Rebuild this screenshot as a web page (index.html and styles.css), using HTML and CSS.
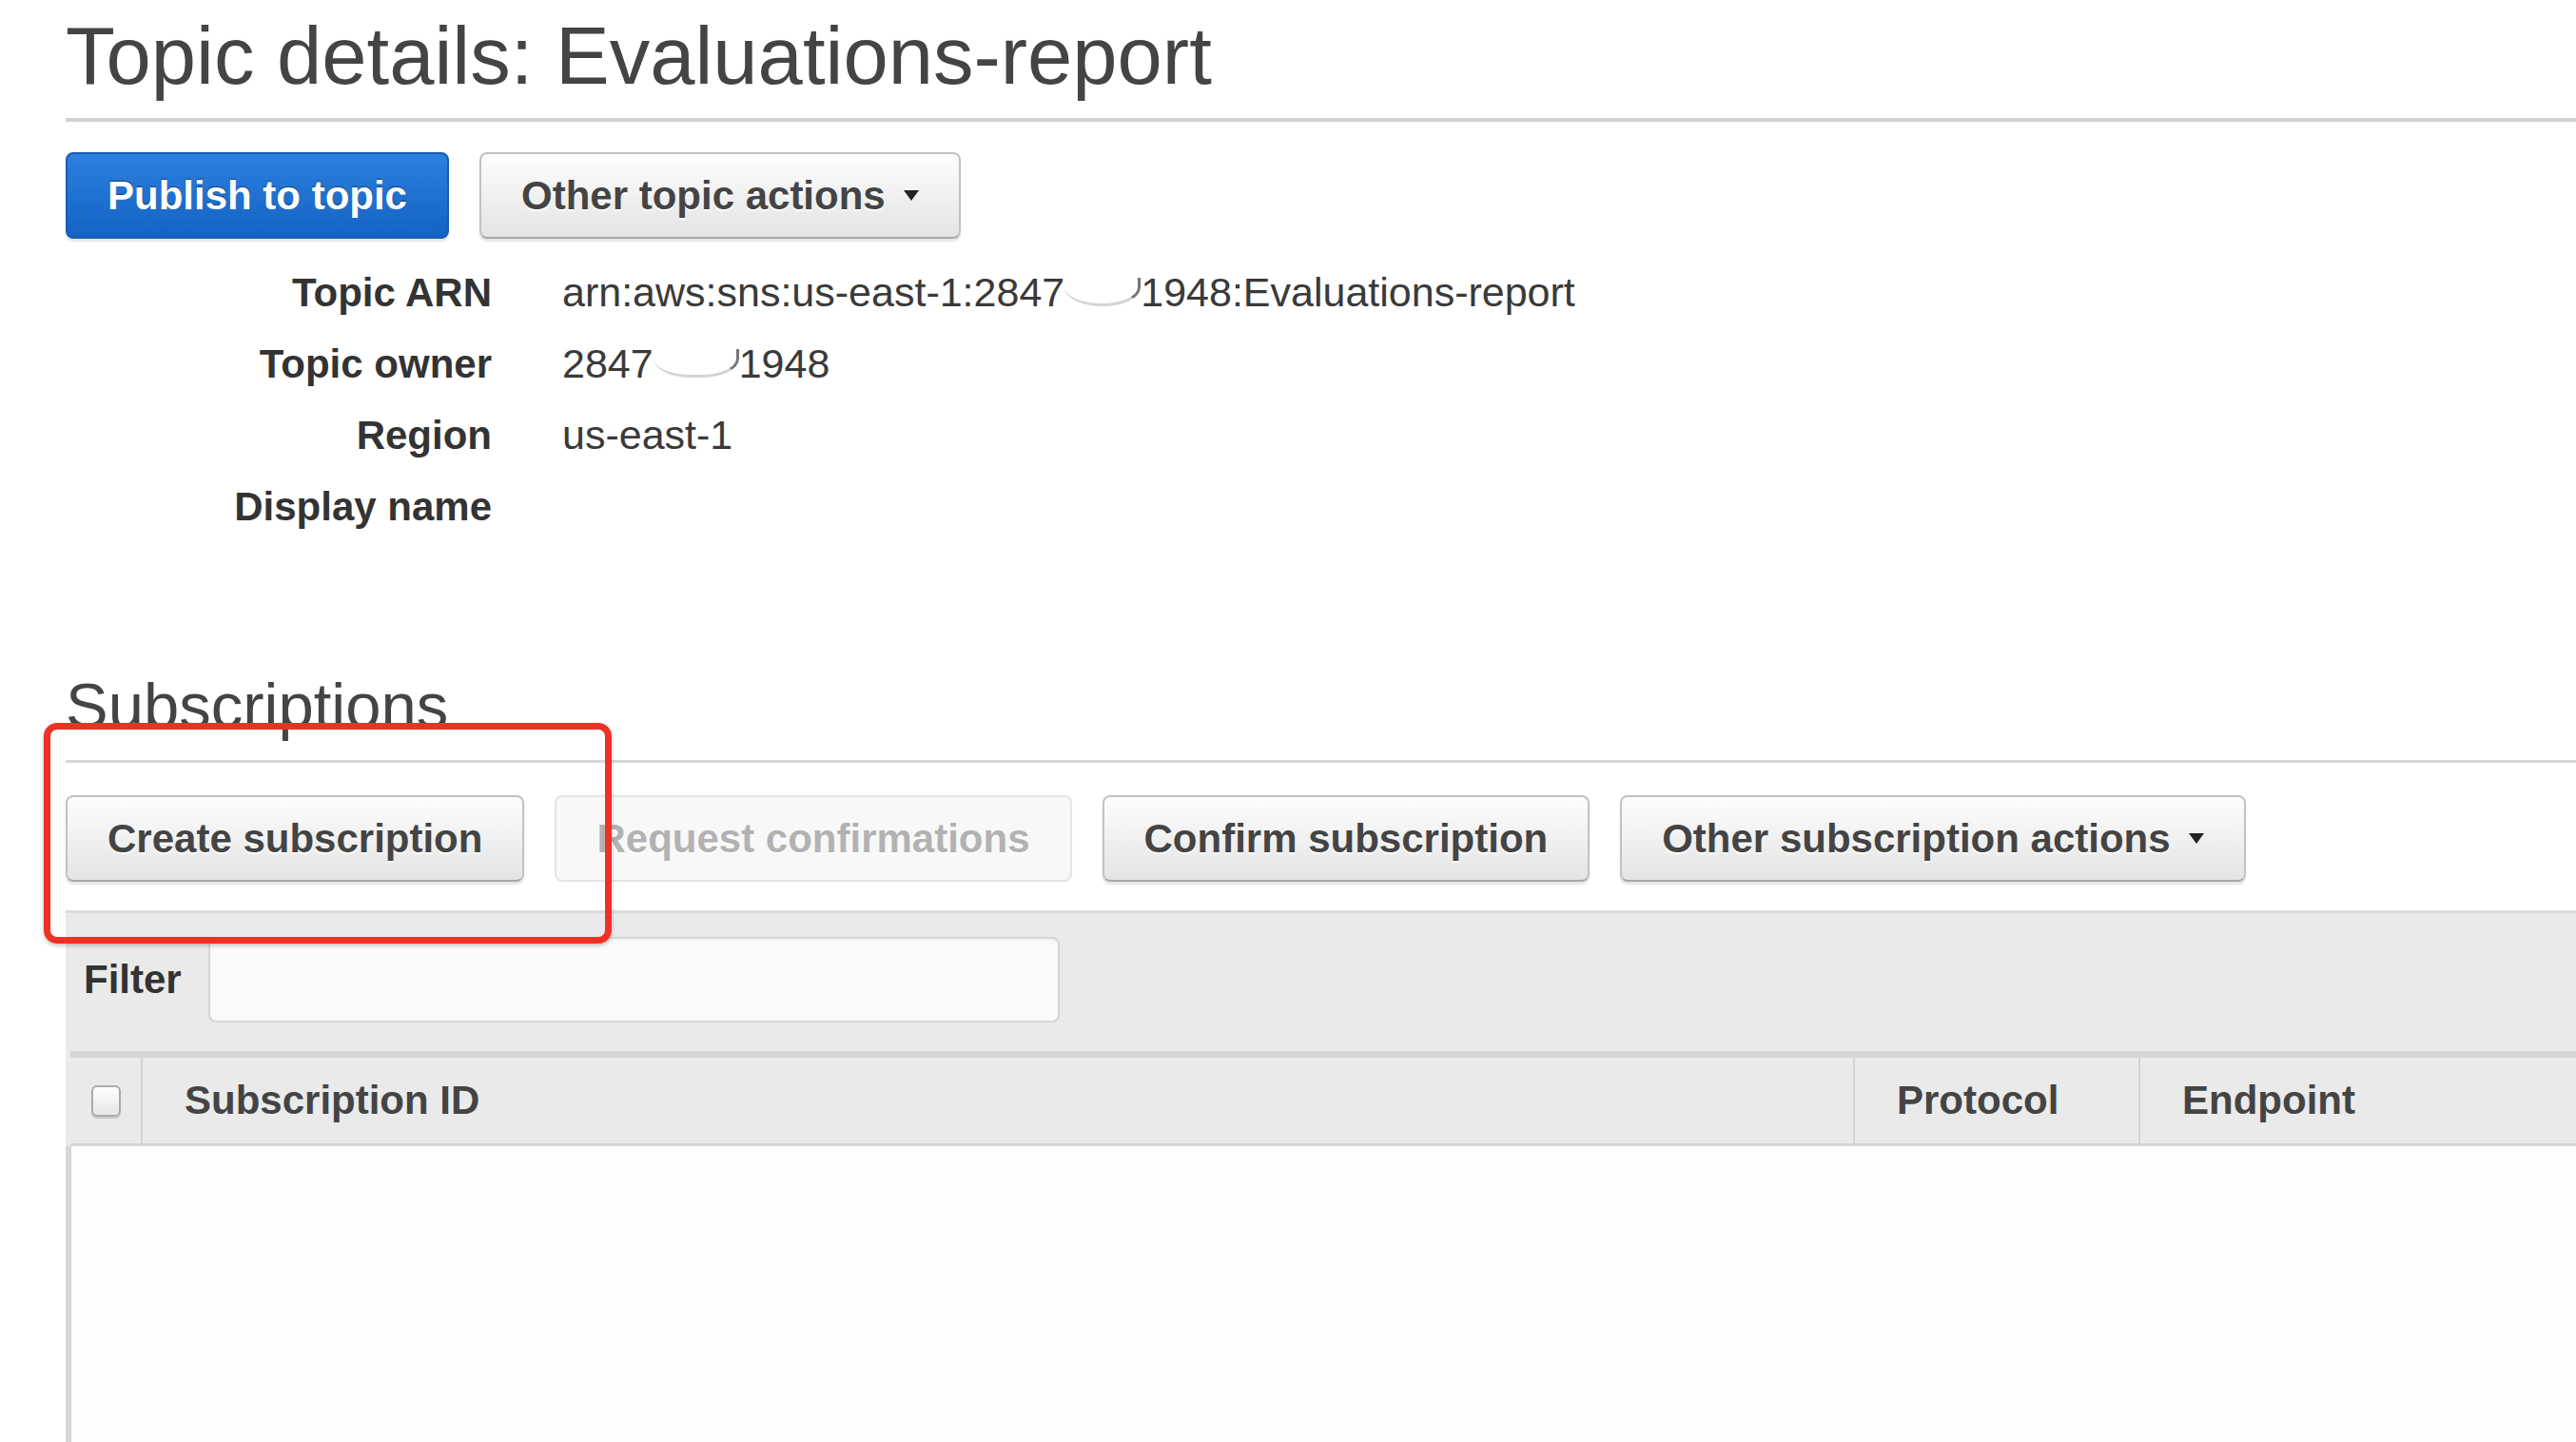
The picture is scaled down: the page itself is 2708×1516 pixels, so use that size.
FILE: index.html
```html
<!DOCTYPE html>
<html lang="en">
<head>
  <meta charset="UTF-8">
  <meta name="viewport" content="width=device-width, initial-scale=1.0">
  <title>Topic details: Evaluations-report</title>
  <link rel="stylesheet" href="styles.css">
</head>
<body>
  <div class="page">
    <h1 class="page-title">Topic details: Evaluations-report</h1>

    <!-- Topic actions -->
    <div class="toolbar">
      <button class="btn btn-primary">Publish to topic</button>
      <button class="btn">Other topic actions <span class="caret"></span></button>
    </div>

    <!-- Topic details -->
    <dl class="details">
      <dt>Topic ARN</dt>
      <dd>arn:aws:sns:us-east-1:2847<span class="redact"></span>1948:Evaluations-report</dd>
      <dt>Topic owner</dt>
      <dd>2847<span class="redact redact-wide"></span>1948</dd>
      <dt>Region</dt>
      <dd>us-east-1</dd>
      <dt>Display name</dt>
      <dd></dd>
    </dl>

    <h2 class="section-title">Subscriptions</h2>

    <div class="toolbar toolbar-subs">
      <button class="btn">Create subscription</button>
      <button class="btn" disabled>Request confirmations</button>
      <button class="btn">Confirm subscription</button>
      <button class="btn">Other subscription actions <span class="caret"></span></button>
    </div>

    <!-- Subscriptions table -->
    <div class="panel">
      <div class="filter">
        <label for="filter">Filter</label>
        <input type="text" id="filter">
      </div>
      <div class="grid">
        <div class="grid-head">
          <div class="cell cell-check"><span class="checkbox"></span></div>
          <div class="cell cell-id">Subscription ID</div>
          <div class="cell cell-protocol">Protocol</div>
          <div class="cell cell-endpoint">Endpoint</div>
        </div>
        <div class="grid-body"></div>
      </div>
    </div>

    <!-- Annotation drawn over the screenshot -->
    <div class="highlight"></div>
  </div>
</body>
</html>
```

FILE: styles.css
```css
* {
  box-sizing: border-box;
}

html, body {
  margin: 0;
  height: 100%;
  overflow: hidden;
  background: #fff;
  font-family: "Liberation Sans", Arial, sans-serif;
  color: #333;
}

.page {
  position: relative;
  padding: 13px 0 0 69px;
}

/* Page heading */
.page-title {
  margin: 0;
  font-size: 85px;
  line-height: 92px;
  font-weight: 400;
  color: #444;
  padding-bottom: 19px;
  border-bottom: 4px solid #d2d2d2;
}

/* Buttons */
.toolbar {
  display: flex;
  gap: 32px;
  margin-top: 32px;
}

.btn {
  height: 91px;
  padding: 0 42px;
  font-family: "Liberation Sans", Arial, sans-serif;
  font-size: 42px;
  font-weight: 700;
  color: #444;
  background: linear-gradient(#fdfdfd, #e4e4e4);
  border: 2px solid #c2c2c2;
  border-bottom-color: #a9a9a9;
  border-radius: 8px;
  box-shadow: 0 3px 2px rgba(0, 0, 0, 0.1);
  text-shadow: 0 2px 0 #fff;
  cursor: pointer;
}

.btn-primary {
  color: #fff;
  background: linear-gradient(#2c80de, #1363c4);
  border-color: #1a5db0;
  text-shadow: 0 -1px 1px rgba(0, 0, 0, 0.45);
}

.btn:disabled {
  color: #b2b2b2;
  background: #f8f8f8;
  border-color: #e4e4e4;
  box-shadow: none;
  cursor: default;
}

.caret {
  display: inline-block;
  vertical-align: middle;
  margin: -6px 0 0 8px;
  border-left: 8px solid transparent;
  border-right: 8px solid transparent;
  border-top: 11px solid #222;
}

/* Details list */
.details {
  display: grid;
  grid-template-columns: 448px 1fr;
  column-gap: 74px;
  margin: 19px 0 0;
  font-size: 42px;
  line-height: 75px;
}

.details dt {
  text-align: right;
  font-weight: 700;
  color: #333;
}

.details dd {
  margin: 0;
  font-size: 43px;
  color: #3a3a3a;
}

/* Blurred-out account digits */
.redact {
  display: inline-block;
  width: 80px;
  height: 30px;
  border-bottom: 3px solid #d4d4d4;
  border-right: 3px solid #777;
  border-radius: 0 0 40px 40px / 0 0 20px 20px;
}

.redact-wide {
  width: 90px;
}

/* Subscriptions */
.section-title {
  margin: 132px 0 0;
  font-size: 67px;
  line-height: 80px;
  font-weight: 400;
  color: #444;
  padding-bottom: 17px;
  border-bottom: 3px solid #d8d8d8;
}

.toolbar-subs {
  margin-top: 34px;
  gap: 32px;
}

.panel {
  margin-top: 30px;
  background: #eaeaea;
  border-top: 3px solid #dcdcdc;
  padding-top: 25px;
}

.filter {
  display: flex;
  align-items: center;
  gap: 28px;
  padding-left: 19px;
}

.filter label {
  font-size: 42px;
  font-weight: 700;
  color: #333;
}

.filter input {
  width: 895px;
  height: 90px;
  border: 2px solid #d6d6d6;
  border-radius: 8px;
  background: #fafafa;
  box-shadow: inset 0 2px 2px rgba(0, 0, 0, 0.04);
  outline: none;
}

.grid {
  margin-top: 30px;
}

.grid-head {
  display: flex;
  height: 100px;
  margin-left: 5px;
  border-top: 7px solid #d6d6d6;
  border-bottom: 3px solid #d6d6d6;
  font-size: 42px;
  font-weight: 700;
  color: #444;
}

.cell {
  display: flex;
  align-items: center;
  border-right: 2px solid #d3d3d3;
  padding-left: 44px;
}

.cell-check {
  width: 76px;
  padding-left: 0;
  justify-content: center;
}

.cell-id {
  flex: 1;
}

.cell-protocol {
  width: 300px;
}

.cell-endpoint {
  width: 458px;
  border-right: none;
}

.checkbox {
  width: 31px;
  height: 33px;
  border: 2px solid #aaa;
  border-radius: 6px;
  background: linear-gradient(#fff, #e6e6e6);
  box-shadow: 0 2px 1px rgba(0, 0, 0, 0.15);
}

.grid-body {
  height: 316px;
  background: #fdfdfd;
  border-left: 6px solid #d8d8d8;
}

/* Red annotation box */
.highlight {
  position: absolute;
  left: 46px;
  top: 760px;
  width: 597px;
  height: 232px;
  border: 7px solid #ee3124;
  border-radius: 14px;
  box-shadow: 0 2px 4px rgba(0, 0, 0, 0.25);
  pointer-events: none;
}
```
